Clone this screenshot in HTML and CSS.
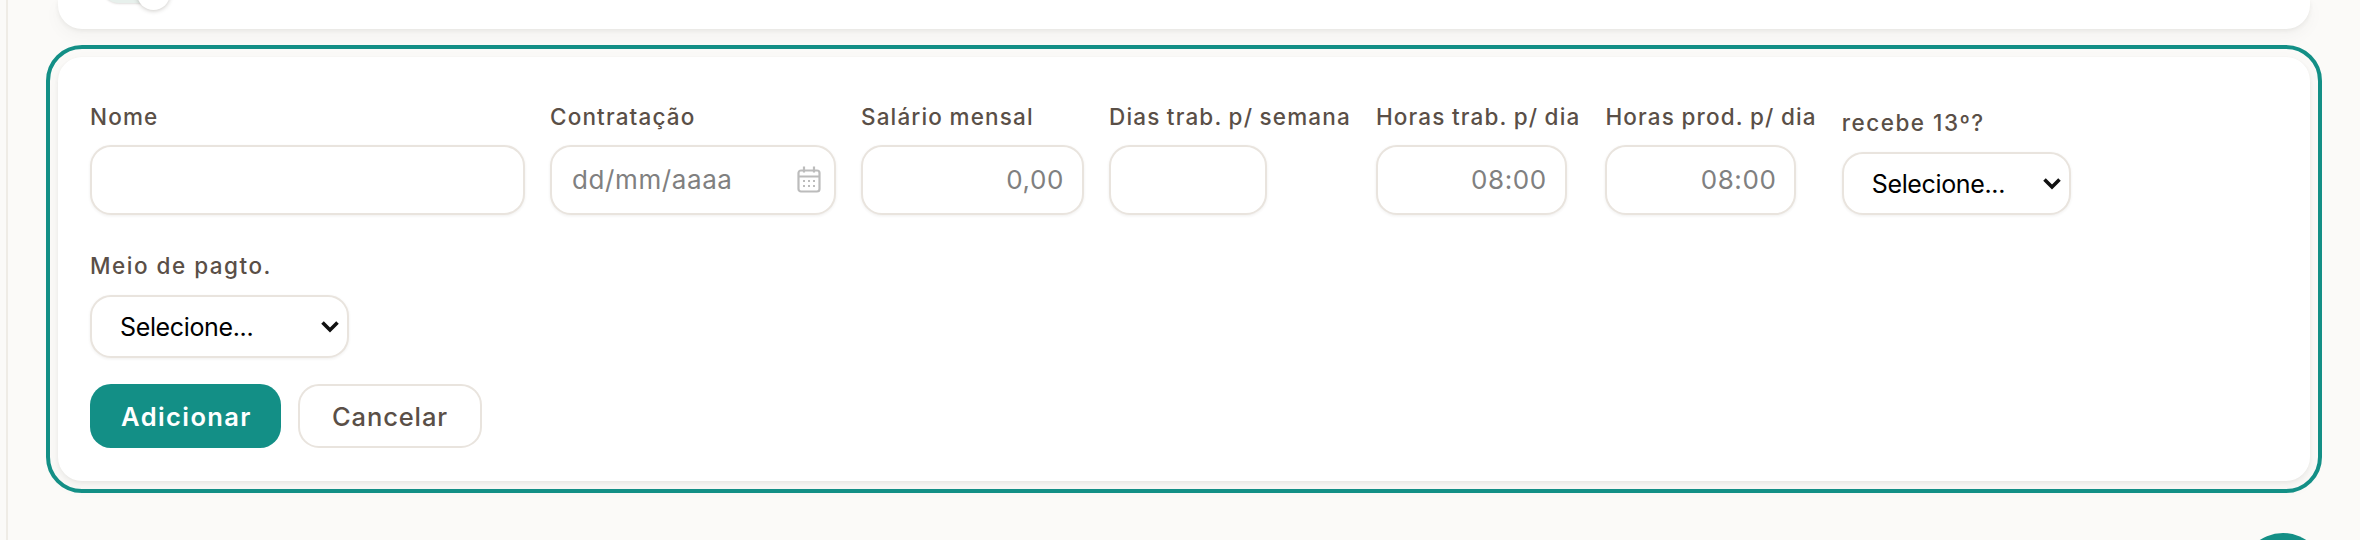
FILE: index.html
```html
<!DOCTYPE html>
<html lang="pt-BR">
<head>
    <meta charset="UTF-8">
    <meta name="viewport" content="width=device-width, initial-scale=1.0">
    <title>Funcionários</title>
    <link rel="stylesheet" href="styles.css">
</head>
<body>
    <main class="page">
        <section class="card card-top">
            <div class="switch"><span class="switch-knob"></span></div>
        </section>

        <form class="card card-form">
            <div class="form-grid">
                <div class="field field-nome">
                    <label>Nome</label>
                    <input type="text">
                </div>
                <div class="field field-data">
                    <label>Contratação</label>
                    <div class="date-wrap">
                        <input type="text" placeholder="dd/mm/aaaa">
                        <svg class="date-icon" viewBox="0 0 24 27" fill="none" stroke="#bcbcbc" stroke-width="2.2">
                            <rect x="1.5" y="4.5" width="21" height="21" rx="2.5"/>
                            <path d="M1.5 10.5h21M7 0.5v6M17 0.5v6"/>
                            <path d="M6 15h2M11 15h2M16 15h2M6 20h2M11 20h2M16 20h2" stroke-width="2"/>
                        </svg>
                    </div>
                </div>
                <div class="field field-salario">
                    <label>Salário mensal</label>
                    <input class="num" type="text" placeholder="0,00">
                </div>
                <div class="field field-dias">
                    <label>Dias trab. p/ semana</label>
                    <input class="num" type="text">
                </div>
                <div class="field field-horas">
                    <label>Horas trab. p/ dia</label>
                    <input class="num" type="text" placeholder="08:00">
                </div>
                <div class="field field-horas">
                    <label>Horas prod. p/ dia</label>
                    <input class="num" type="text" placeholder="08:00">
                </div>
                <div class="field field-select">
                    <label class="label-plain">recebe 13º?</label>
                    <select><option>Selecione...</option></select>
                </div>
                <div class="field field-select field-break">
                    <label class="label-plain">Meio de pagto.</label>
                    <select><option>Selecione...</option></select>
                </div>
            </div>
            <div class="actions">
                <button type="button" class="btn btn-primary">Adicionar</button>
                <button type="button" class="btn btn-ghost">Cancelar</button>
            </div>
        </form>
    </main>
    <div class="fab"></div>
</body>
</html>
```
FILE: styles.css
```css
* {
    box-sizing: border-box;
}

body {
    margin: 0;
    height: 540px;
    overflow: hidden;
    position: relative;
    background-color: #fbfaf8;
    font-family: Inter, "Noto Sans", sans-serif;
}

.page {
    height: 540px;
    margin-left: 6px;
    padding: 0 50px 0 50px;
    border-left: 2px solid #efece6;
}

.card {
    background-color: #fff;
    border-radius: 24px;
    box-shadow: 0 2px 4px rgba(60,50,40,0.07), 0 6px 18px rgba(60,50,40,0.04);
}

.card-top {
    height: 29px;
    position: relative;
    border-radius: 0 0 24px 24px;
}

.switch {
    position: absolute;
    left: 44px;
    top: -30px;
    width: 68px;
    height: 33px;
    border-radius: 17px;
    background-color: #e7f0ec;
    box-shadow: 0 1px 2px rgba(60,50,40,0.15);
}

.switch-knob {
    position: absolute;
    right: 0;
    top: 7px;
    width: 33px;
    height: 33px;
    border-radius: 50%;
    background-color: #fff;
    box-shadow: 0 1px 4px rgba(60,50,40,0.25);
}

.card-form {
    margin-top: 28px;
    height: 424px;
    padding: 46px 28px 0 32px;
    outline: 4px solid #138f86;
    outline-offset: 8px;
}

.form-grid {
    display: flex;
    flex-wrap: wrap;
    align-items: flex-end;
    column-gap: 25px;
    row-gap: 37px;
}

.field {
    display: flex;
    flex-direction: column;
}

.field label {
    font-size: 22.5px;
    font-weight: 500;
    line-height: 28px;
    letter-spacing: 1.15px;
    word-spacing: -0.7px;
    color: #5a4f47;
    margin-bottom: 14px;
}

.field .label-plain {
    letter-spacing: 1.5px;
    word-spacing: 0;
    margin-bottom: 15px;
}

.field input {
    height: 70px;
    width: 100%;
    padding: 0 20px 2px 20px;
    background-color: #fff;
    border: 2px solid #e9e4de;
    border-radius: 21px;
    font-family: inherit;
    font-size: 26px;
    letter-spacing: 0.6px;
    color: #222;
    outline: none;
    box-shadow: 0 1px 3px rgba(60,50,40,0.08);
}

.field input::placeholder {
    color: #808080;
    opacity: 1;
}

.field input.num {
    padding-right: 18px;
    text-align: right;
}

.field-nome input { width: 435px; }
.field-data input { width: 286px; }
.field-salario input { width: 223px; }
.field-dias input { width: 158px; }
.field-horas input { width: 191px; }

.date-wrap {
    position: relative;
}

.date-icon {
    position: absolute;
    right: 15px;
    top: 21px;
    width: 24px;
    height: 27px;
}

.field select {
    appearance: none;
    height: 63px;
    width: 229px;
    padding: 0 40px 0 28px;
    background-color: #fff;
    background-image: url("data:image/svg+xml,%3Csvg xmlns='http://www.w3.org/2000/svg' viewBox='0 0 20 13'%3E%3Cpath d='M2.5 2.5l7.5 7.5 7.5-7.5' fill='none' stroke='%23111' stroke-width='3.6'/%3E%3C/svg%3E");
    background-repeat: no-repeat;
    background-position: right 7px center;
    background-size: 20px 13px;
    border: 2px solid #e9e4de;
    border-radius: 21px;
    font-family: inherit;
    font-size: 25px;
    letter-spacing: -0.35px;
    color: #000;
    outline: none;
    box-shadow: 0 1px 3px rgba(60,50,40,0.08);
}

.field-break {
    flex-basis: 100%;
    align-items: flex-start;
}

.field-break select {
    width: 259px;
}

.actions {
    display: flex;
    gap: 17px;
    margin-top: 26px;
}

.btn {
    height: 64px;
    border-radius: 21px;
    font-family: inherit;
    font-size: 25.5px;
}

.btn-primary {
    width: 191px;
    padding: 0 0 0 2px;
    background-color: #138f86;
    border: none;
    color: #fff;
    font-weight: 600;
    letter-spacing: 1.4px;
}

.btn-ghost {
    width: 184px;
    background-color: #fff;
    border: 2px solid #e9e4de;
    color: #5a4f47;
    font-weight: 500;
    letter-spacing: 0.9px;
}

.fab {
    position: absolute;
    left: 2241px;
    top: 533px;
    width: 84px;
    height: 84px;
    border-radius: 50%;
    background-color: #138f86;
}
```
